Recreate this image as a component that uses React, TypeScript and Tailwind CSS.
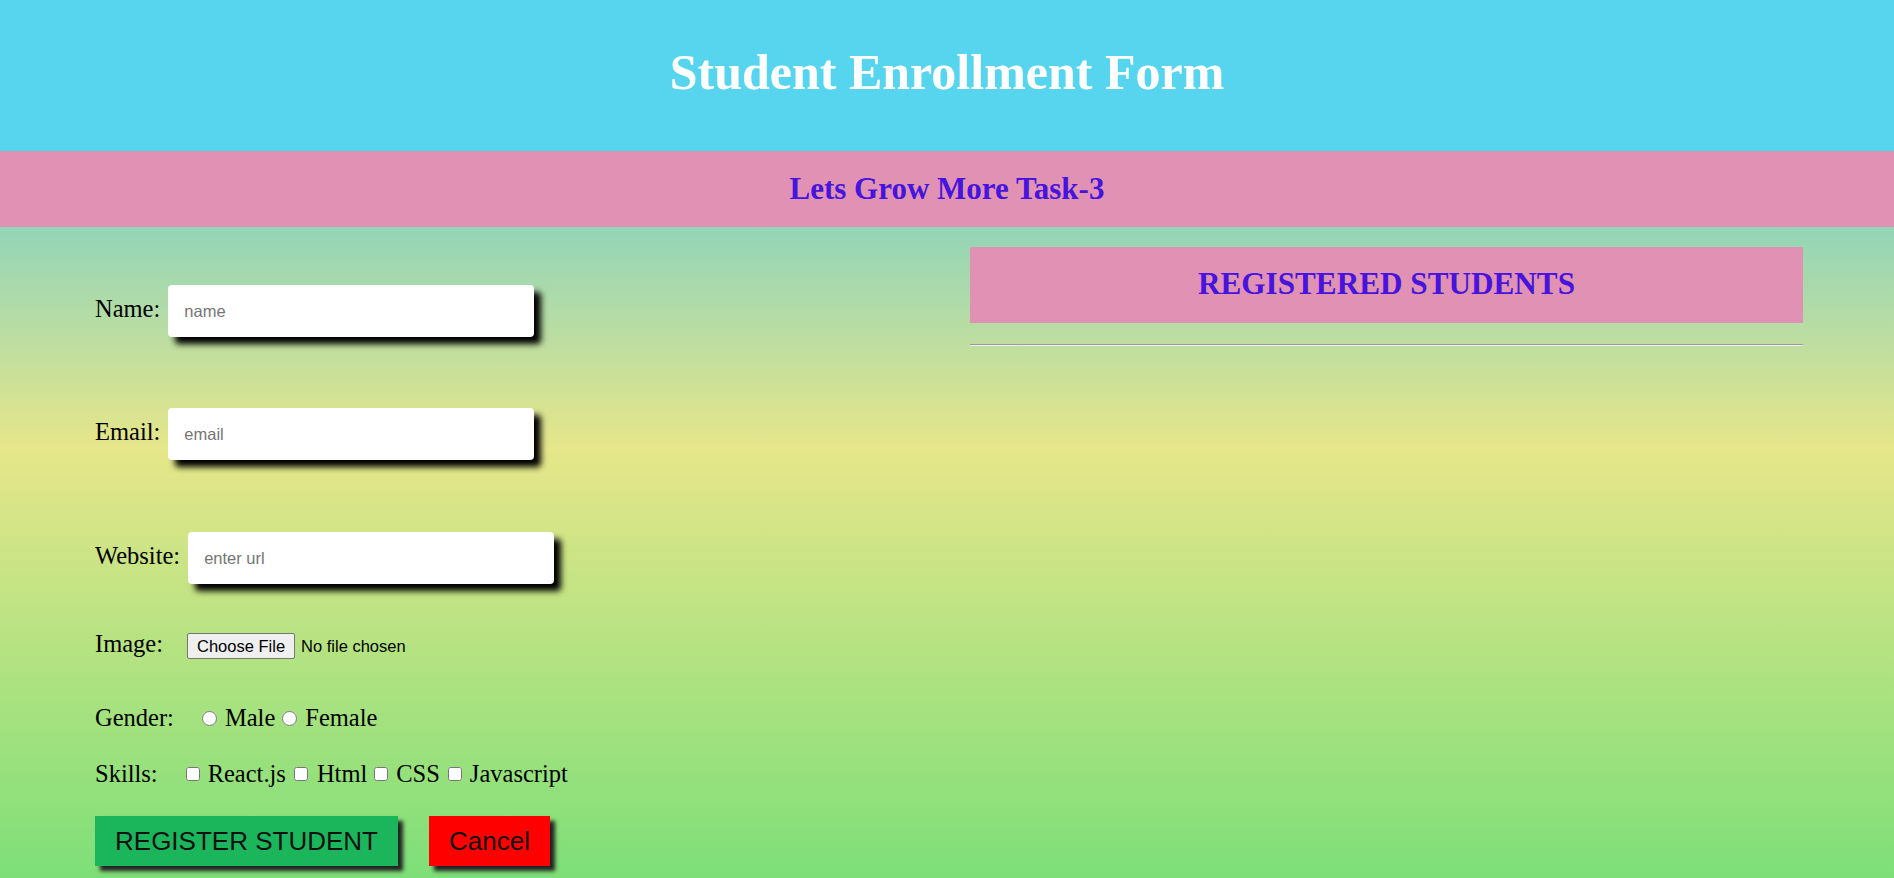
import React from "react";

const serif = "font-['Liberation_Serif','Times_New_Roman',serif]";
const sans = "font-['Liberation_Sans',Arial,sans-serif]";

function TextRow({ label, placeholder, mt, gap }: { label: string; placeholder: string; mt: string; gap: string }) {
  return (
    <div className={`flex items-baseline ${mt}`}>
      <span className={`${serif} text-[24.5px] leading-[26px] text-black`}>{label}</span>
      <input
        type="text"
        placeholder={placeholder}
        className={`${gap} ${sans} h-[52px] w-[366px] rounded-[4px] bg-white pl-[16px] text-[16.5px] text-black placeholder:text-[#757575] outline-none shadow-[7px_7px_6px_#000]`}
      />
    </div>
  );
}

export default function App() {
  return (
    <div className={`min-h-screen flex flex-col ${serif}`}>
      <header className="h-[151px] bg-[#57d5ee] pt-[47px] text-center">
        <h1 className={`${serif} text-[50px] leading-[50px] font-bold text-white`}>Student Enrollment Form</h1>
      </header>
      <div className="h-[76px] bg-[#e091b4] pt-[22px] text-center">
        <h2 className={`${serif} text-[31px] leading-[31px] font-bold text-[#4614dc]`}>Lets Grow More Task-3</h2>
      </div>
      <main className="flex-1 flex bg-[linear-gradient(to_bottom,#92d5b8_0%,#e6e68a_34%,#7ddf78_100%)]">
        <section className="w-[947px] pl-[95px] flex flex-col">
          <TextRow label="Name:" placeholder="name" mt="mt-[58px]" gap="ml-[8px]" />
          <TextRow label="Email:" placeholder="email" mt="mt-[71px]" gap="ml-[8px]" />
          <TextRow label="Website:" placeholder="enter url" mt="mt-[72px]" gap="ml-[8px]" />

          <div className="flex items-baseline mt-[47px]">
            <span className="text-[24.5px] leading-[26px] text-black">Image:</span>
            <span className={`ml-[24px] inline-block ${sans} text-[16.5px] leading-[18px] px-[9px] py-[3px] border border-[#767676] rounded-[2px] bg-[#efefef] text-black`}>
              Choose File
            </span>
            <span className={`ml-[6px] ${sans} text-[16.5px] leading-[18px] text-black`}>No file chosen</span>
          </div>

          <div className="flex items-end mt-[46px] text-[24.5px] leading-[26px] text-black">
            <span>Gender:</span>
            <input type="radio" name="gender" className="ml-[28px] mb-[5px] w-[15px] h-[15px] m-0" />
            <span className="ml-[8px]">Male</span>
            <input type="radio" name="gender" className="ml-[7px] mb-[5px] w-[15px] h-[15px] m-0" />
            <span className="ml-[8px]">Female</span>
          </div>

          <div className="flex items-end mt-[30px] text-[24.5px] leading-[26px] text-black">
            <span>Skills:</span>
            <input type="checkbox" className="ml-[28px] mb-[6px] w-[14px] h-[14px] m-0" />
            <span className="ml-[8px]">React.js</span>
            <input type="checkbox" className="ml-[8px] mb-[6px] w-[14px] h-[14px] m-0" />
            <span className="ml-[9px]">Html</span>
            <input type="checkbox" className="ml-[7px] mb-[6px] w-[14px] h-[14px] m-0" />
            <span className="ml-[8px]">CSS</span>
            <input type="checkbox" className="ml-[8px] mb-[6px] w-[14px] h-[14px] m-0" />
            <span className="ml-[8px]">Javascript</span>
          </div>

          <div className="flex mt-[29px]">
            <button className={`${sans} h-[50px] w-[303px] bg-[#1bb65c] text-[26px] text-[#111] shadow-[5px_5px_4px_#222]`}>
              REGISTER STUDENT
            </button>
            <button className={`${sans} ml-[31px] h-[50px] w-[121px] bg-[#ff0000] text-[26px] text-[#111] shadow-[5px_5px_4px_#222]`}>
              Cancel
            </button>
          </div>
        </section>

        <section className="w-[833px] ml-[23px] pt-[20px]">
          <div className="h-[76px] bg-[#e091b4] pt-[21px] text-center">
            <h2 className={`${serif} text-[31.2px] leading-[31px] font-bold text-[#4614dc]`}>REGISTERED STUDENTS</h2>
          </div>
          <div className="mt-[21px] h-[2px] border-t border-b border-t-[#9a9a9a] border-b-[#eeeeee]" />
        </section>
      </main>
    </div>
  );
}
